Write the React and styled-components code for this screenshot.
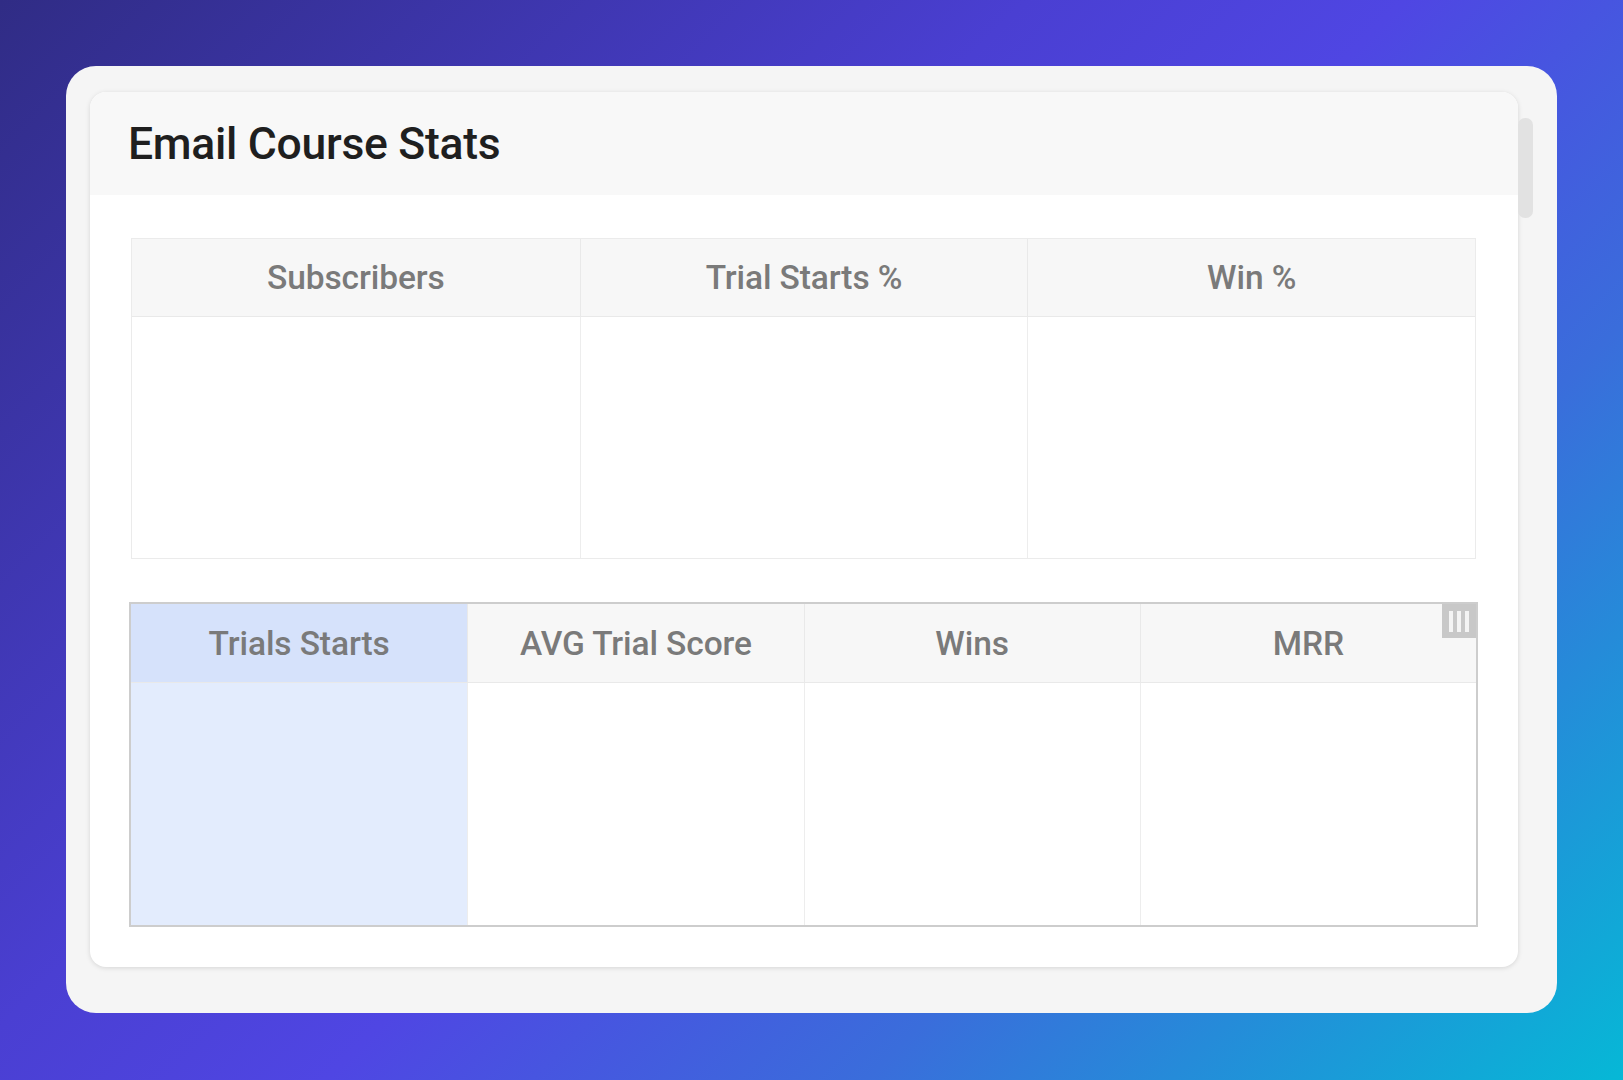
import React from "react";
import styled, { createGlobalStyle } from "styled-components";

const Global = createGlobalStyle`
  html, body { margin: 0; padding: 0; }
  body {
    width: 1623px;
    height: 1080px;
    overflow: hidden;
    font-family: Roboto, "Noto Sans", Arial, sans-serif;
    background: linear-gradient(135deg, #302c85 0%, #4a3fd2 38%, #4f46e3 52%, #3a6ddb 72%, #06b8d6 100%);
  }
`;

const Page = styled.div`
  box-sizing: border-box;
  width: 1623px;
  height: 1080px;
  padding: 66px 0 0 66px;
`;

const Card = styled.div`
  position: relative;
  box-sizing: border-box;
  width: 1491px;
  height: 947px;
  border-radius: 30px;
  background: #f5f5f5;
  padding: 26px 39px 46px 24px;
`;

const ScrollThumb = styled.div`
  position: absolute;
  left: 1452px;
  top: 52px;
  width: 15px;
  height: 100px;
  border-radius: 7px;
  background: #e2e2e2;
`;

const Panel = styled.div`
  box-sizing: border-box;
  height: 100%;
  border-radius: 16px;
  background: #ffffff;
  box-shadow: 0 1px 5px rgba(0, 0, 0, 0.13);
  overflow: hidden;
  display: flex;
  flex-direction: column;
`;

const Header = styled.div`
  height: 103px;
  flex: none;
  background: #f8f8f8;
  display: flex;
  align-items: center;
  padding-left: 38px;
`;

const Title = styled.h1`
  margin: 0;
  font-size: 44.5px;
  font-weight: 500;
  letter-spacing: -0.3px;
  color: #1f1f1f;
`;

const Body = styled.div`
  padding: 43px 42px 40px 41px;
  display: flex;
  flex-direction: column;
  gap: 43px;
`;

const Table = styled.div`
  position: relative;
  box-sizing: border-box;
  display: grid;
  grid-template-columns: repeat(${(p) => p.$cols}, 1fr);
  grid-template-rows: ${(p) => p.$head}px ${(p) => p.$body}px;
  border: ${(p) => (p.$strong ? "2px solid #cdcdcd" : "1px solid #ebebeb")};
  margin: ${(p) => (p.$strong ? "0 -2px" : "0")};
  ${(p) => (p.$strong ? "box-shadow: inset 1px 1px 1px rgba(0,0,0,0.06);" : "")}
`;

const HeadCell = styled.div`
  display: flex;
  align-items: center;
  justify-content: center;
  background: ${(p) => (p.$active ? "#d6e2fb" : "#f7f7f7")};
  border-left: ${(p) => (p.$first ? "none" : "1px solid #e9e9e9")};
  border-bottom: 1px solid #e9e9e9;
  font-size: 33.5px;
  font-weight: 500;
  letter-spacing: -0.1px;
  color: #7a7a7a;
`;

const BodyCell = styled.div`
  background: ${(p) => (p.$active ? "#e3ecfd" : "#ffffff")};
  border-left: ${(p) => (p.$first ? "none" : "1px solid #ededed")};
`;

const ColumnsButton = styled.div`
  position: absolute;
  top: 0;
  right: 0;
  width: 34px;
  height: 34px;
  background: #c8c8c8;
  display: flex;
  align-items: center;
  justify-content: center;
  gap: 4px;
`;

const Bar = styled.span`
  display: block;
  width: 4px;
  height: 21px;
  background: #f4f4f4;
`;

function StatTable({ columns, head, body, strong, activeIndex, withButton }) {
  return (
    <Table $cols={columns.length} $head={head} $body={body} $strong={strong}>
      {columns.map((c, i) => (
        <HeadCell key={c} $first={i === 0} $active={i === activeIndex}>
          {c}
        </HeadCell>
      ))}
      {columns.map((c, i) => (
        <BodyCell key={c + "-b"} $first={i === 0} $active={i === activeIndex} />
      ))}
      {withButton && (
        <ColumnsButton>
          <Bar />
          <Bar />
          <Bar />
        </ColumnsButton>
      )}
    </Table>
  );
}

export default function App() {
  return (
    <>
      <Global />
      <Page>
        <Card>
          <Panel>
            <Header>
              <Title>Email Course Stats</Title>
            </Header>
            <Body>
              <StatTable
                columns={["Subscribers", "Trial Starts %", "Win %"]}
                head={78}
                body={241}
              />
              <StatTable
                columns={["Trials Starts", "AVG Trial Score", "Wins", "MRR"]}
                head={79}
                body={242}
                strong
                activeIndex={0}
                withButton
              />
            </Body>
          </Panel>
          <ScrollThumb />
        </Card>
      </Page>
    </>
  );
}
